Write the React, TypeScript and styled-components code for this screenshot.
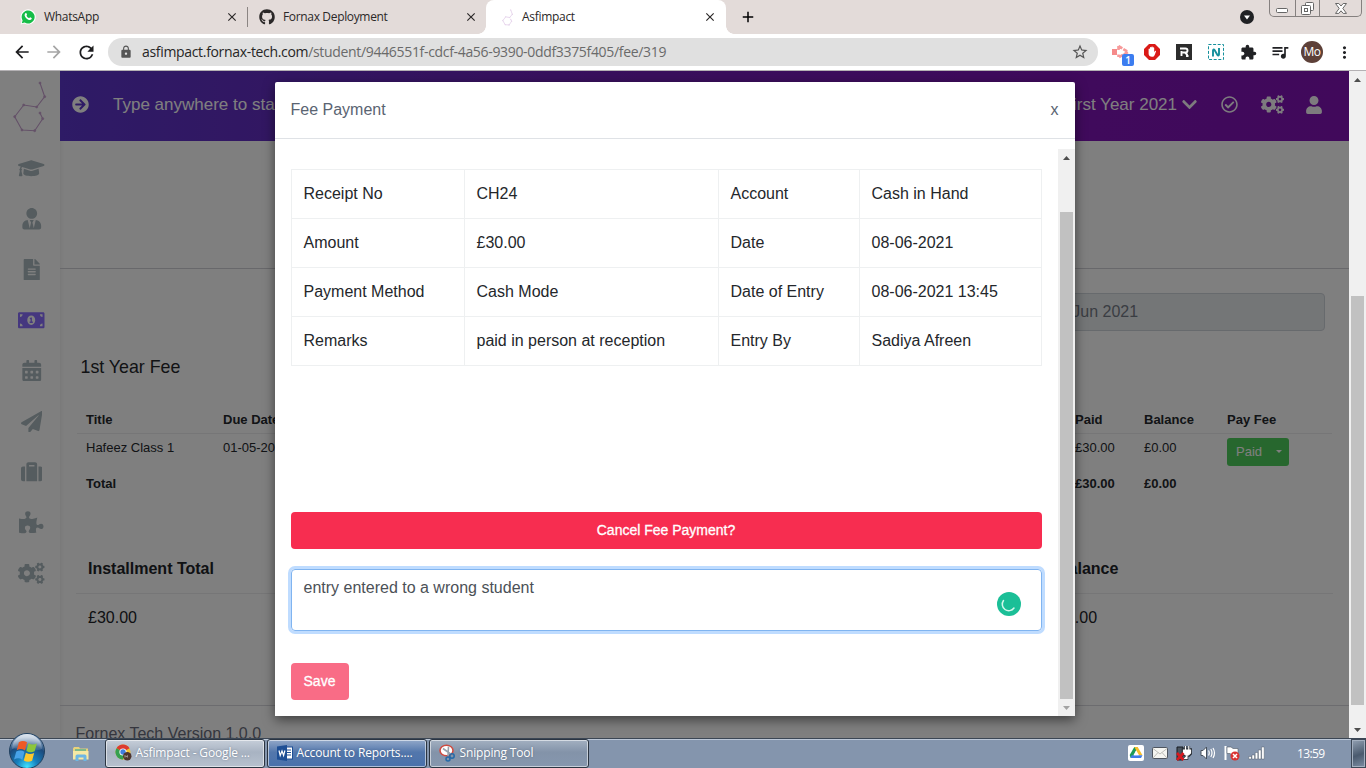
import React from "react";
import styled, { createGlobalStyle } from "styled-components";
import {
  FaGraduationCap, FaUserTie, FaFileAlt, FaMoneyBillAlt, FaCalendarAlt, FaPaperPlane,
  FaSuitcase, FaPuzzlePiece, FaCogs, FaArrowCircleRight, FaChevronDown, FaRegCheckCircle,
  FaUser, FaGithub,
} from "react-icons/fa";
import {
  MdArrowBack, MdArrowForward, MdRefresh, MdLock, MdStarBorder, MdExtension,
  MdQueueMusic, MdMoreVert, MdClose, MdAdd,
} from "react-icons/md";

const Global = createGlobalStyle`
  *, *::before, *::after { box-sizing: border-box; }
  body { margin: 0; overflow: hidden; font-family: "Liberation Sans", Arial, sans-serif; }
  svg { display: block; flex: none; }
`;
const ui = `"Open Sans", "Noto Sans", sans-serif`;

const Screen = styled.div`
  width: 1366px; height: 768px; overflow: hidden; display: flex; flex-direction: column; background: #fff;
`;

/* ---------- browser frame ---------- */
const TabStrip = styled.div`
  height: 34px; flex: none; display: flex; background: #e3dbd9; font-family: ${ui};
`;
const Tab = styled.div<{ $w: number; $pl: number; $pr: number; $active?: boolean }>`
  width: ${p => p.$w}px; height: 34px; padding: 0 ${p => p.$pr}px 0 ${p => p.$pl}px;
  display: flex; align-items: center; position: relative; color: #2b2828;
  ${p => p.$active && `
    background: #fff; border-radius: 8px 8px 0 0;
    &::before, &::after { content: ""; position: absolute; bottom: 0; width: 8px; height: 8px; }
    &::before { left: -8px; background: radial-gradient(circle at 0 0, transparent 7.5px, #fff 8px); }
    &::after { right: -8px; background: radial-gradient(circle at 100% 0, transparent 7.5px, #fff 8px); }
  `}
`;
const TabTitle = styled.span<{ $ls?: number }>`
  flex: 1; font-size: 12px; line-height: 16px; white-space: nowrap; letter-spacing: ${p => p.$ls ?? -0.3}px;
`;
const TabIcon = styled.span<{ $w: number; $gap: number }>`
  width: ${p => p.$w}px; margin-right: ${p => p.$gap}px; display: flex; justify-content: center;
`;
const TabDivider = styled.i`
  width: 1px; height: 20px; margin-top: 7px; background: #8b8583;
`;
const NewTab = styled.div`
  width: 44px; display: flex; align-items: center; justify-content: center;
`;
const StripEnd = styled.div`
  margin-left: auto; display: flex; align-items: flex-start;
`;
const TabSearch = styled.div` padding: 10px 15px 0 0; `;
const WindowButtons = styled.div`
  display: flex; width: 93px; height: 17px; margin-right: 4px; border: 1px solid #85807f; border-top: 0;
  border-radius: 0 0 5px 5px;
`;
const WindowButton = styled.div<{ $w: number }>`
  width: ${p => p.$w}px; display: flex; justify-content: center; align-items: center;
  & + & { border-left: 1px solid #85807f; }
`;
const Toolbar = styled.div`
  height: 37px; flex: none; display: flex; align-items: center; padding-left: 10px; background: #fff;
  border-bottom: 1px solid #b4b1b4;
`;
const ToolSlot = styled.div<{ $w: number }>`
  width: ${p => p.$w}px; flex: none; height: 28px; display: flex; align-items: center; justify-content: center; position: relative;
`;
const Omnibox = styled.div`
  width: 990px; flex: none; height: 28px; border-radius: 14px; background: #e0e0e0; display: flex; align-items: center;
  margin: 0 6px 0 10px; padding: 0 9px 0 11px; font-family: ${ui};
`;
const Url = styled.span`
  flex: 1; margin-left: 9px; font-size: 14px; line-height: 20px; letter-spacing: -0.325px; color: #6a6a6a; white-space: nowrap;
  b { font-weight: 400; color: #262626; }
`;
const CountBadge = styled.span`
  position: absolute; left: 18px; top: 16px; width: 12px; height: 12px; border-radius: 2px; background: #3c7df0; color: #fff;
  font: 600 10px/12px ${ui}; text-align: center;
`;
const Avatar = styled.div`
  width: 22px; height: 22px; border-radius: 50%; background: #5d4038; color: #fff; text-align: center;
  font: 12px/21px ${ui}; letter-spacing: -0.4px;
`;

/* ---------- page ---------- */
const Viewport = styled.div` height: 667px; flex: none; display: flex; position: relative; `;
const Page = styled.div` width: 1349px; height: 667px; display: flex; overflow: hidden; position: relative; `;
const Sidebar = styled.nav`
  width: 60px; flex: none; display: flex; flex-direction: column; align-items: center; padding-left: 3px;
  background: #fff; color: #abb9be; box-shadow: 0 0 6px rgba(0,0,0,.09);
`;
const LogoBox = styled.div` height: 72px; flex: none; padding: 9px 5px 0 0; `;
const SideLink = styled.a<{ $active?: boolean }>`
  height: 50.6px; flex: none; display: flex; align-items: center; color: ${p => (p.$active ? "#8a6fff" : "inherit")};
`;
const Main = styled.div` flex: 1; display: flex; flex-direction: column; min-width: 0; > * { flex-shrink: 0; } `;
const TopBar = styled.header`
  height: 70px; display: flex; align-items: center; padding: 0 26px 3px 12px; color: #fff;
  background: linear-gradient(90deg, #5c36cc 0%, #721fb8 45%, #8014b8 80%, #8212b6 100%); font-size: 17px;
  > span { white-space: nowrap; }
`;
const SearchHint = styled.span` margin-left: 24px; flex: 1; `;
const BarIcon = styled.span<{ $ml: number }>` margin-left: ${p => p.$ml}px; display: flex; opacity: .97; `;
const Filler = styled.div` height: 128px; border-bottom: 1px solid #d0d0d6; `;
const DateField = styled.div`
  width: 280px; height: 38px; margin: 24px 24px 0 auto; border: 1px solid #cfd4da; border-radius: 4px;
  background: #e9ecef; color: #757b86; display: flex; align-items: center; font-size: 16px;
  span { margin-left: 4px; }
`;
const SectionTitle = styled.h2` margin: 25px 0 0 20.5px; font-size: 17.8px; line-height: 22px; font-weight: 400; color: #24262b; `;
const FeeGrid = styled.div<{ $h: number; $bold?: boolean; $head?: boolean }>`
  height: ${p => p.$h}px; margin: 0 17px; padding: ${p => (p.$head ? 27 : 0)}px 0 0 9px; display: grid;
  grid-template: 100% / 137px 852px 69px 83px 1fr; align-items: center; font-size: 13px; color: #25282d;
  font-weight: ${p => (p.$bold ? 700 : 400)}; ${p => p.$head && "border-bottom: 1px solid #ececee;"}
`;
const PaidButton = styled.div`
  width: 62px; height: 28px; margin-top: 10px; border-radius: 3px; background: #4fce5c; color: #fff; display: flex; align-items: center;
  padding: 0 7px 2px 9px; justify-content: space-between; font-size: 13px;
`;
const Caret = styled.i` border: 3.5px solid transparent; border-top-color: #fff; border-bottom: 0; `;
const TotalsRow = styled.div<{ $h: number; $bold?: boolean }>`
  height: ${p => p.$h}px; margin: 0 16px; padding-left: 12px; display: grid; grid-template-columns: 969px 1fr; align-items: center;
  font-size: 16px; color: #202328; font-weight: ${p => (p.$bold ? 700 : 400)};
  ${p => p.$bold && "margin-top: 38px; border-bottom: 1px solid #ececee;"}
`;
const Footer = styled.footer`
  margin-top: 64px; border-top: 1px solid #d8d8de; padding: 18px 0 0 15.5px; font-size: 16px; line-height: 20px; color: #6a6d7c;
`;
const Backdrop = styled.div` position: absolute; inset: 0; background: rgba(0,0,0,.5); `;

/* ---------- scrollbars ---------- */
const Track = styled.div` width: 17px; flex: none; height: 100%; background: #f0f0f0; display: flex; flex-direction: column; align-items: center; `;
const ArrowBox = styled.div` width: 17px; height: 17px; display: flex; align-items: center; justify-content: center; `;
const Thumb = styled.div<{ $before: number; $h: number }>`
  width: 13px; height: ${p => p.$h}px; margin-top: ${p => p.$before}px; margin-bottom: auto; background: #c1c1c1;
`;
function Scrollbar({ before, height, dimEnd }: { before: number; height: number; dimEnd?: boolean }) {
  return (
    <Track>
      <ArrowBox><svg width="7" height="4"><path d="M0 4 3.5 0 7 4z" fill="#4d4d4d" /></svg></ArrowBox>
      <Thumb $before={before} $h={height} />
      <ArrowBox><svg width="7" height="4"><path d="M0 0 3.5 4 7 0z" fill={dimEnd ? "#a3a3a3" : "#4d4d4d"} /></svg></ArrowBox>
    </Track>
  );
}

/* ---------- modal ---------- */
const Modal = styled.section`
  position: absolute; left: 275px; top: 11px; width: 800px; height: 634px; background: #fff; border-radius: 2px 2px 0 0;
  box-shadow: 0 4px 12px rgba(0,0,0,.5); display: flex; flex-direction: column; overflow: hidden;
`;
const ModalHead = styled.div`
  height: 57px; flex: none; padding: 0 16.5px 0 15.5px; display: flex; align-items: center; justify-content: space-between;
  border-bottom: 1px solid #dfe2e6; color: #5a6472; font-size: 16px; line-height: 20px;
`;
const ModalMain = styled.div` margin-top: 10px; height: 567px; display: flex; `;
const ModalBody = styled.div` width: 783px; flex: none; padding: 20px 16px 0 16px; `;
const Details = styled.div`
  display: grid; grid-template-columns: 173px 254px 141px 182px; border-top: 1px solid #eef0f1; border-left: 1px solid #eef0f1;
`;
const Cell = styled.div`
  height: 49px; padding: 0 0 1px 11.5px; display: flex; align-items: center; font-size: 16px; color: #24272b; white-space: nowrap;
  border-right: 1px solid #eef0f1; border-bottom: 1px solid #eef0f1;
`;
const DangerButton = styled.div<{ $w: number; $top: number; $disabled?: boolean }>`
  width: ${p => p.$w}px; height: 37px; margin-top: ${p => p.$top}px; padding: 0 1px 2px 0; border-radius: 4px;
  background: ${p => (p.$disabled ? "#f96c86" : "#f72d50")}; color: #fff; font-size: 14px;
  display: flex; align-items: center; justify-content: center; -webkit-text-stroke: 0.3px #fff;
`;
const Remark = styled.div`
  position: relative; width: 751px; height: 62px; margin-top: 20px; padding: 7px 11.5px; border: 1px solid #80b4f0; border-radius: 4px;
  box-shadow: 0 0 0 3px #bfdcff; font-size: 16px; line-height: 21px; color: #4c5157;
`;
const Checker = styled.div` position: absolute; right: 20px; top: 22px; `;

/* ---------- taskbar ---------- */
const Taskbar = styled.div`
  height: 30px; flex: none; display: flex; align-items: stretch; position: relative; background: #8495ad;
  border-top: 1px solid #3b4654; box-shadow: inset 0 1px 0 #bcc8d8; font-family: ${ui}; color: #fff;
`;
const Orb = styled.div` position: absolute; left: 8px; top: -7px; `;
const QuickLaunch = styled.div` width: 105px; padding: 7px 0 0 72px; `;
const TaskButton = styled.div<{ $bg: string }>`
  width: 160px; height: 29px; margin-right: 2px; border: 1px solid #2b3542; border-radius: 3px;
  box-shadow: inset 0 0 0 1px rgba(255,255,255,.55); background: ${p => p.$bg}; display: flex; align-items: center;
  padding: 0 0 2px 9px; gap: 3.5px; font-size: 12px; letter-spacing: -0.15px; text-shadow: 0 0 2px rgba(60,75,100,.5); white-space: nowrap;
`;
const Tray = styled.div` margin-left: auto; display: flex; align-items: center; gap: 8px; padding-bottom: 1px; `;
const Clock = styled.span` width: 28px; margin: 0 26px 0 24px; font-size: 12px; letter-spacing: -0.6px; white-space: nowrap; `;
const ShowDesktop = styled.div`
  width: 15px; height: 29px; border: 1px solid #3d4857; box-shadow: inset 0 0 0 1px #a4b0c0;
  background: linear-gradient(160deg, #93a1b3, #4a5a6e 55%, #7d8da3);
`;

/* ---------- drawings ---------- */
const WhatsAppLogo = () => (
  <svg width="16" height="16" viewBox="0 0 16 16">
    <path d="M.6 15.4 1.6 11.7A7.6 7.6 0 1 1 4.4 14.5z" fill="#fff" />
    <path d="M1.8 14.2 2.6 11.4A6.5 6.5 0 1 1 4.7 13.5z" fill="#16bd48" />
    <path d="M5.4 4.2c.4-.4.9-.3 1.1.2l.5 1.1c.1.3-.6 1-.5 1.2.5 1 1.4 1.9 2.5 2.4.3.1.9-.9 1.2-.8l1.3.7c.4.2.4.7.1 1.1-.6.9-1.7 1.1-2.7.8-2-.6-3.7-2.4-4.2-4.2-.2-.9.1-1.9.7-2.5z" fill="#fff" />
  </svg>
);
const atoms = [[28, 3], [32.7, 16.7], [24.7, 27], [11.7, 25], [2.7, 36.7], [10, 50], [22.7, 50.7], [30.7, 38.7], [28, 33]];
const Molecule = ({ w, h, color, stroke }: { w: number; h: number; color: string; stroke: number }) => (
  <svg width={w} height={h} viewBox="0 0 35 54" fill="none" stroke={color} strokeWidth={stroke}>
    <polyline points={atoms.map(a => a.join(",")).join(" ")} />
    {atoms.map(([x, y]) => <circle key={y} cx={x} cy={y} r="1.1" fill={color} strokeWidth={stroke / 2} />)}
  </svg>
);
const Camera = () => (
  <svg width="18" height="14" viewBox="0 0 18 14">
    <rect x="1" y="4" width="5" height="6" fill="#f58a8a" />
    <path d="M7.5 1 17 7 7.5 12.5V9.5M7.5 1V5" fill="none" stroke="#f79a9a" strokeWidth="2.6" strokeDasharray="4.5 1.2" />
  </svg>
);
const Blocker = () => (
  <svg width="16" height="16" viewBox="0 0 16 16">
    <path d="M5 0h6l5 5v6l-5 5H5l-5-5V5z" fill="#da1a17" />
    <path d="M4.6 8V5.2a.7.7 0 0 1 1.4 0V3.8a.7.7 0 0 1 1.4 0V3.1a.7.7 0 0 1 1.4 0v.8a.7.7 0 0 1 1.4 0v4.3l.8-1.1c.5-.5 1.2-.1 1 .5l-1.3 3.3c-.6 1.3-1.3 1.9-2.7 1.9-2 0-3.4-1-3.4-3z" fill="#fff" />
  </svg>
);
const SquareR = () => (
  <svg width="16" height="16" viewBox="0 0 16 16">
    <rect width="16" height="16" fill="#2c2c2c" />
    <path d="M4 4.5H9.5a2 2 0 0 1 0 4H6.5M5.5 7v5M9 8.5l2 2v1.5h1.5" fill="none" stroke="#fff" strokeWidth="1.9" />
  </svg>
);
const DashedN = () => (
  <svg width="16" height="16" viewBox="0 0 16 16" fill="none" stroke="#15909c">
    <rect x=".5" y=".5" width="15" height="15" strokeDasharray="3 1.6" />
    <path d="M5 12.5V6.5q.5-2 1.7-.3l2.6 4.6q1.3 1.5 1.7-.3V4" strokeWidth="1.9" />
  </svg>
);
const StartOrb = () => (
  <svg width="38" height="38" viewBox="0 0 38 38">
    <defs>
      <radialGradient id="orb" cx=".5" cy=".95" r=".85">
        <stop offset="0" stopColor="#3fe3ff" /><stop offset=".35" stopColor="#1680bd" /><stop offset=".75" stopColor="#1c4a7c" /><stop offset="1" stopColor="#7f9cbd" />
      </radialGradient>
      <linearGradient id="shine" x1="0" y1="0" x2="0" y2="1">
        <stop offset="0" stopColor="#fff" stopOpacity=".75" /><stop offset="1" stopColor="#fff" stopOpacity=".1" />
      </linearGradient>
    </defs>
    <circle cx="19" cy="19" r="17.5" fill="url(#orb)" stroke="#20405f" />
    <path d="M4 17a15 15 0 0 1 30 0c-9 4-21-2-30 0z" fill="url(#shine)" />
    <g transform="translate(-2.6 -3.2) scale(1.17)">
      <path d="M11.5 11.5c2.5-1.6 4.5-1.5 7 .1l-1.8 6.9c-2.3-1.5-4.5-1.6-7-.2z" fill="#ee5a25" />
      <path d="M19.7 12.3c2.4 1.4 4.6 1.5 7.2.2L25 19.2c-2.5 1.3-4.7 1.2-7.1-.2z" fill="#8cc63c" />
      <path d="M9.3 19.5c2.5-1.4 4.7-1.3 7 .2l-1.8 6.7c-2.4-1.5-4.6-1.6-7.1-.1z" fill="#47a2e8" />
      <path d="M17.5 20.4c2.4 1.4 4.6 1.5 7.1.2l-1.8 6.7c-2.5 1.3-4.7 1.2-7.1-.2z" fill="#fdc82c" />
    </g>
  </svg>
);
const Explorer = () => (
  <svg width="18" height="16" viewBox="0 0 18 16">
    <path d="M1 2.5 2 1h5l1 1.5h8V13H1z" fill="#e8d27a" /><path d="M3 3h11v4H3z" fill="#7fba8a" />
    <path d="M1 5h15.5v8.5H1z" fill="#f6e9a4" /><path d="M3.5 15V10.5c0-1.5 1-2 2.5-2h6c1.5 0 2.5.5 2.5 2V15h-3v-3.5h-5V15z" fill="#6db7e4" />
  </svg>
);
const ChromeLogo = () => (
  <svg width="17" height="17" viewBox="0 0 17 17">
    <circle cx="8" cy="8" r="7.5" fill="#f2c230" />
    <path d="M8 8 1.5 4.2A7.5 7.5 0 0 1 14.5 4.2z" fill="#dc3b30" /><path d="M8 8 1.5 4.2A7.5 7.5 0 0 0 8 15.5l2-5z" fill="#35a050" />
    <circle cx="8" cy="8" r="3.6" fill="#fff" /><circle cx="8" cy="8" r="2.7" fill="#3f7fe0" />
    <circle cx="12.3" cy="12.3" r="4.2" fill="#4e352f" /><path d="M10 13.5v-2l1.2 1.2 1.2-1.2v2" stroke="#cfc5c2" strokeWidth=".7" fill="none" />
  </svg>
);
const WordLogo = () => (
  <svg width="16" height="16" viewBox="0 0 16 16">
    <rect x="7" y="2" width="8.5" height="12" fill="#fff" stroke="#1e4f95" />
    <path d="M10 5h4M10 7.5h4M10 10h4" stroke="#1e4f95" /><path d="M0 1.5 10 0v16L0 14.5z" fill="#1e4f95" />
    <path d="m2 5.5 1.2 5L5 6l1.6 4.5 1.3-5" fill="none" stroke="#fff" strokeWidth="1.2" />
  </svg>
);
const Snip = () => (
  <svg width="17" height="18" viewBox="0 0 17 18">
    <ellipse cx="7.5" cy="6.5" rx="6.5" ry="5.3" fill="#fff" stroke="#cf4b40" strokeWidth="1.6" />
    <path d="M4 4.5 11 9.5M9.5 2.5 9 12" stroke="#99a2ab" strokeWidth="1.6" />
    <circle cx="13" cy="12" r="2.2" fill="none" stroke="#256aa8" strokeWidth="1.5" /><circle cx="9" cy="15" r="2" fill="none" stroke="#256aa8" strokeWidth="1.5" />
  </svg>
);
const Drive = () => (
  <svg width="16" height="16" viewBox="0 0 16 16">
    <rect width="16" height="16" rx="2" fill="#fff" /><path d="M6.3 2h3.4L5 12.8H2.5L1.7 10z" fill="#1d9b57" />
    <path d="M6.3 2h3.4l4.8 8.2H11z" fill="#f8bf2b" /><path d="M3.6 10.2h10.9L13 13H2.5z" fill="#3f7de8" /><path d="m8 5.5 2.6 4.7H5.4z" fill="#fff" />
  </svg>
);
const Mail = () => (
  <svg width="16" height="14" viewBox="0 0 16 14"><rect x=".5" y="1.5" width="15" height="11" rx="1" fill="#f5f5f2" stroke="#4e5560" /><path d="M1 2.5 8 8l7-5.5M1 12l5-5.5M15 12l-5-5.5" stroke="#bdbdb9" fill="none" /></svg>
);
const Power = () => (
  <svg width="16" height="16" viewBox="0 0 16 16">
    <path d="M1 2h6v13H1z" fill="#4b5560" stroke="#161b20" />
    <path d="M7 4.5h8v4l-2 2h-4l-2-2zM9.5 1v4M12.8 1v4M11 10v3.5H8" stroke="#2a3037" strokeWidth="2.6" fill="none" />
    <path d="M7.5 5h7v3l-2 2h-3l-2-2zM9.5 1v4M12.8 1v4M11 10v3.5H8" stroke="#fff" strokeWidth="1.2" fill="#fff" />
    <path d="m1 8 6.5 7M7.5 8 1 15" stroke="#d81920" strokeWidth="2.6" />
  </svg>
);
const Speaker = () => (
  <svg width="16" height="14" viewBox="0 0 16 14"><path d="M1 4.5h2L6.5 1v12L3 9.5H1z" fill="#fff" stroke="#48525e" /><path d="M8.5 4.5q1.5 2.5 0 5M10.8 3q2.4 4 0 8M13 2q3 5 0 10" stroke="#fff" fill="none" strokeWidth="1.2" /></svg>
);
const Flag = () => (
  <svg width="16" height="16" viewBox="0 0 16 16"><path d="M1.5 1v14" stroke="#fff" strokeWidth="2" /><path d="M3 2h4l2 1.5h5V10H8L6 8.5H3z" fill="#fff" stroke="#4f5864" strokeWidth=".6" /><circle cx="11" cy="11" r="4.5" fill="#d93232" /><path d="m9 9 4 4m0-4-4 4" stroke="#fff" strokeWidth="1.5" /></svg>
);
const Signal = () => (
  <svg width="17" height="14" viewBox="0 0 17 14" fill="#fff" stroke="#3e4855" strokeWidth=".4"><path d="M.8 10.5h2.6V13H.8zM4 9h2.6v4H4zM7.2 6.5h2.6V13H7.2zM10.4 4H13v9h-2.6zM13.6 1h2.6v12h-2.6z" /></svg>
);

const details = [
  "Receipt No", "CH24", "Account", "Cash in Hand",
  "Amount", "£30.00", "Date", "08-06-2021",
  "Payment Method", "Cash Mode", "Date of Entry", "08-06-2021 13:45",
  "Remarks", "paid in person at reception", "Entry By", "Sadiya Afreen",
];
const sideLinks = [
  { Icon: FaGraduationCap, size: 26.5 }, { Icon: FaUserTie, size: 21.5 }, { Icon: FaFileAlt, size: 21.5 },
  { Icon: FaMoneyBillAlt, size: 26.5, active: true }, { Icon: FaCalendarAlt, size: 21.5 }, { Icon: FaPaperPlane, size: 21.5 },
  { Icon: FaSuitcase, size: 21.5 }, { Icon: FaPuzzlePiece, size: 24.5 }, { Icon: FaCogs, size: 26.5 },
];

export default function App() {
  return (
    <Screen>
      <Global />
      <TabStrip>
        <Tab $w={247} $pl={20} $pr={8}>
          <TabIcon $w={16} $gap={8}><WhatsAppLogo /></TabIcon><TabTitle>WhatsApp</TabTitle><MdClose size={14} />
        </Tab>
        <TabDivider />
        <Tab $w={238} $pl={11} $pr={8}>
          <TabIcon $w={16} $gap={8}><FaGithub size={16} /></TabIcon><TabTitle $ls={-0.34}>Fornax Deployment</TabTitle><MdClose size={14} />
        </Tab>
        <Tab $w={240} $pl={14} $pr={9} $active>
          <TabIcon $w={14} $gap={8}><Molecule w={11} h={17} color="#e3cfe9" stroke={2.5} /></TabIcon><TabTitle>Asfimpact</TabTitle><MdClose size={14} />
        </Tab>
        <NewTab><MdAdd size={18} /></NewTab>
        <StripEnd>
          <TabSearch><svg width="14" height="14"><circle cx="7" cy="7" r="7" fill="#202124" /><path d="M4 5.5h6L7 9.5z" fill="#fff" /></svg></TabSearch>
          <WindowButtons>
            <WindowButton $w={25}><svg width="13" height="10"><rect x=".5" y="5.5" width="11" height="4" rx="1" fill="#fff" stroke="#666" /></svg></WindowButton>
            <WindowButton $w={25}><svg width="13" height="13" fill="#fff" stroke="#666"><rect x="4.5" y=".5" width="8" height="8" rx="1" /><rect x=".5" y="3.5" width="9" height="9" rx="1" /><rect x="3.5" y="6.5" width="3" height="3" /></svg></WindowButton>
            <WindowButton $w={42}><svg width="12" height="11" viewBox="0 0 12 11"><path d="M.5.5h3.3L6 3 8.2.5h3.3L7.8 5.4l3.7 5H8.2L6 7.8l-2.2 2.6H.5l3.7-5z" fill="#fff" stroke="#666" /></svg></WindowButton>
          </WindowButtons>
        </StripEnd>
      </TabStrip>
      <Toolbar>
        <ToolSlot $w={24}><MdArrowBack size={20} color="#1d1d1f" /></ToolSlot>
        <ToolSlot $w={40}><MdArrowForward size={20} color="#a5a5a5" /></ToolSlot>
        <ToolSlot $w={24}><MdRefresh size={21} color="#1d1d1f" /></ToolSlot>
        <Omnibox>
          <MdLock size={14} color="#555" />
          <Url><b>asfimpact.fornax-tech.com</b>/student/9446551f-cdcf-4a56-9390-0ddf3375f405/fee/319</Url>
          <MdStarBorder size={18} color="#555" />
        </Omnibox>
        <ToolSlot $w={32}><Camera /><CountBadge>1</CountBadge></ToolSlot>
        <ToolSlot $w={32}><Blocker /></ToolSlot>
        <ToolSlot $w={32}><SquareR /></ToolSlot>
        <ToolSlot $w={32}><DashedN /></ToolSlot>
        <ToolSlot $w={32}><MdExtension size={17} color="#202124" /></ToolSlot>
        <ToolSlot $w={32}><MdQueueMusic size={20} color="#202124" /></ToolSlot>
        <ToolSlot $w={32}><Avatar>Mo</Avatar></ToolSlot>
        <ToolSlot $w={32}><MdMoreVert size={19} color="#202124" /></ToolSlot>
      </Toolbar>

      <Viewport>
        <Page>
          <Sidebar>
            <LogoBox><Molecule w={35} h={54} color="#c8a2d0" stroke={1.1} /></LogoBox>
            {sideLinks.map(({ Icon, size, active }, i) => <SideLink key={i} $active={active}><Icon size={size} /></SideLink>)}
          </Sidebar>
          <Main>
            <TopBar>
              <FaArrowCircleRight size={17} />
              <SearchHint>Type anywhere to start</SearchHint>
              <span>First Year 2021</span>
              <BarIcon $ml={4}><FaChevronDown size={17} /></BarIcon>
              <BarIcon $ml={23}><FaRegCheckCircle size={17} /></BarIcon>
              <BarIcon $ml={23}><FaCogs size={23} /></BarIcon>
              <BarIcon $ml={21}><FaUser size={18} /></BarIcon>
            </TopBar>
            <Filler />
            <DateField><span>08 Jun 2021</span></DateField>
            <SectionTitle>1st Year Fee</SectionTitle>
            <FeeGrid $h={56} $bold $head>
              <span>Title</span><span>Due Date</span><span>Paid</span><span>Balance</span><span>Pay Fee</span>
            </FeeGrid>
            <FeeGrid $h={26}>
              <span>Hafeez Class 1</span><span>01-05-2021</span><span>£30.00</span><span>£0.00</span>
              <PaidButton>Paid<Caret /></PaidButton>
            </FeeGrid>
            <FeeGrid $h={47} $bold>
              <span>Total</span><span /><span>£30.00</span><span>£0.00</span><span />
            </FeeGrid>
            <TotalsRow $h={49} $bold><span>Installment Total</span><span>Balance</span></TotalsRow>
            <TotalsRow $h={47}><span>£30.00</span><span>£0.00</span></TotalsRow>
            <Footer>Fornex Tech Version 1.0.0</Footer>
          </Main>
          <Backdrop />
        </Page>
        <Scrollbar before={208} height={409} />
        <Modal>
          <ModalHead><span>Fee Payment</span><span>x</span></ModalHead>
          <ModalMain>
            <ModalBody>
              <Details>{details.map((d, i) => <Cell key={i}>{d}</Cell>)}</Details>
              <DangerButton $w={751} $top={146}>Cancel Fee Payment?</DangerButton>
              <Remark>
                entry entered to a wrong student
                <Checker><svg width="24" height="24"><circle cx="12" cy="12" r="12" fill="#1bbf97" /><path d="M6.5 8.5A6.3 6.3 0 1 0 17 16" fill="none" stroke="#d5f7ec" strokeWidth="1.5" strokeLinecap="round" /></svg></Checker>
              </Remark>
              <DangerButton $w={58} $top={32} $disabled>Save</DangerButton>
            </ModalBody>
            <Scrollbar before={46} height={487} dimEnd />
          </ModalMain>
        </Modal>
      </Viewport>

      <Taskbar>
        <QuickLaunch><Explorer /></QuickLaunch>
        <TaskButton $bg="linear-gradient(#c6ced9, #a8b3c2 45%, #b7c1ce)"><ChromeLogo />Asfimpact - Google ...</TaskButton>
        <TaskButton $bg="linear-gradient(#92a8c9, #5377ac 45%, #4a71ab)"><WordLogo />Account to Reports....</TaskButton>
        <TaskButton $bg="linear-gradient(#a3b0c1, #8393a9 45%, #8697ae)"><Snip />Snipping Tool</TaskButton>
        <Tray>
          <Drive /><Mail /><Power /><Speaker /><Flag /><Signal />
          <Clock>13:59</Clock>
        </Tray>
        <ShowDesktop />
        <Orb><StartOrb /></Orb>
      </Taskbar>
    </Screen>
  );
}
